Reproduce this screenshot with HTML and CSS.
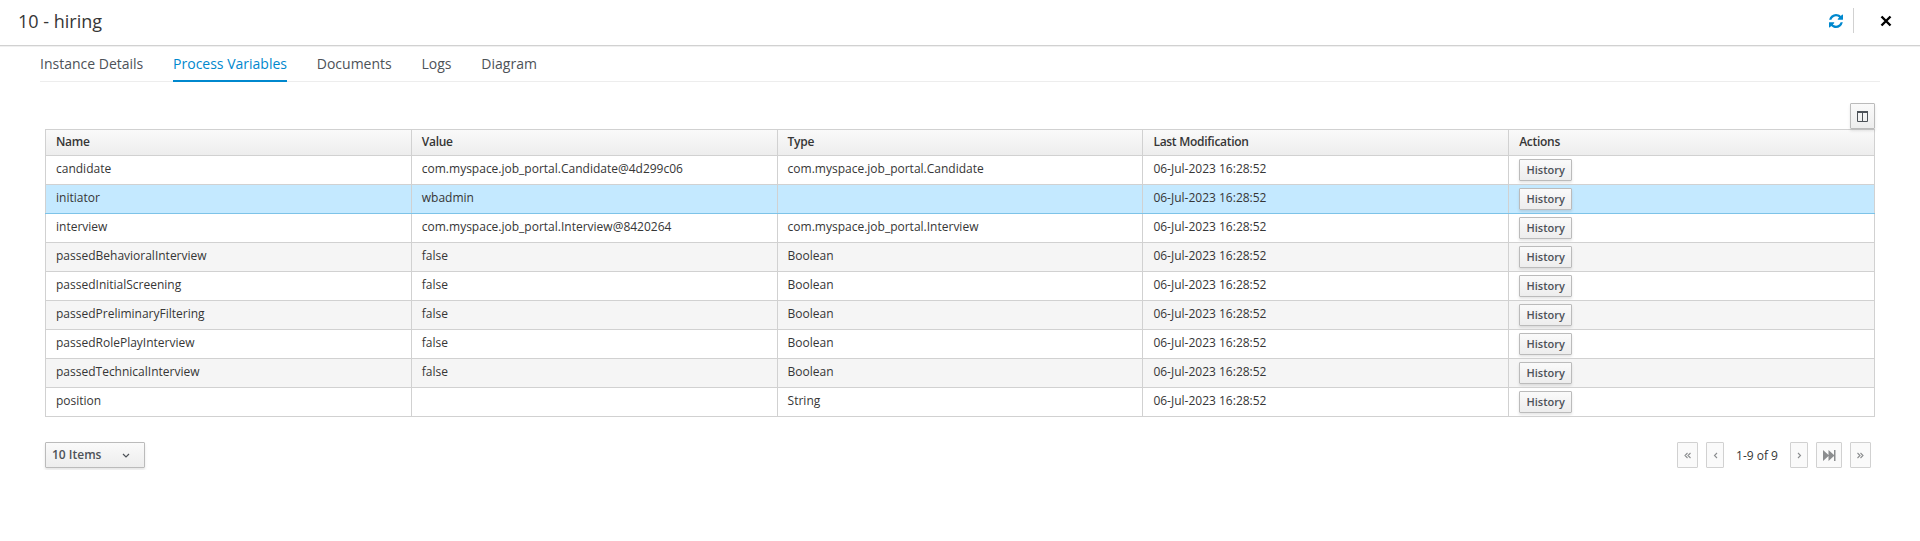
FILE: index.html
```html
<!DOCTYPE html>
<html lang="en">
<head>
<meta charset="utf-8">
<title>10 - hiring</title>
<link rel="stylesheet" href="styles.css">
</head>
<body>
<header class="header">
  <h1 class="title">10 - hiring</h1>
  <div class="tools">
    <svg class="refresh" width="14" height="14" viewBox="0 0 1536 1536" fill="currentColor"><path d="M1511 928q0 5-1 7-64 268-268 434.500T764 1536q-146 0-282.500-55T238 1324l-129 129q-19 19-45 19t-45-19-19-45V960q0-26 19-45t45-19h448q26 0 45 19t19 45-19 45l-137 137q71 66 161 102t187 36q134 0 250-65t186-179q11-17 53-117 8-23 30-23h192q13 0 22.500 9.500t9.500 22.500zm25-800v448q0 26-19 45t-45 19h-448q-26 0-45-19t-19-45 19-45l138-138Q969 256 768 256q-134 0-250 65T332 500q-11 17-53 117-8 23-30 23H50q-13 0-22.500-9.500T18 608v-7q65-268 270-434.500T768 0q146 0 284 55.500T1297 212l130-129q19-19 45-19t45 19 19 45z"/></svg>
    <span class="divider"></span>
    <svg class="close" width="12" height="12" viewBox="0 0 12 12"><path d="M1.500 1.500l9 9M10.500 1.500l-9 9" fill="none" stroke="currentColor" stroke-width="2.400"/></svg>
  </div>
</header>
<nav class="tabs">
  <a class="tab">Instance Details</a>
  <a class="tab active">Process Variables</a>
  <a class="tab">Documents</a>
  <a class="tab">Logs</a>
  <a class="tab">Diagram</a>
</nav>
<main class="content">
  <div class="toolbar">
    <button class="columns"><svg width="11" height="11" viewBox="0 0 11 11" fill="none" stroke="currentColor"><path d="M.5 1v9.500h10V1M5.500 2v8"/><path d="M0 1h11" stroke-width="2"/></svg></button>
  </div>
  <table class="grid">
    <thead><tr><th>Name</th><th>Value</th><th>Type</th><th>Last Modification</th><th>Actions</th></tr></thead>
    <tbody>
      <tr><td>candidate</td><td>com.myspace.job_portal.Candidate@4d299c06</td><td>com.myspace.job_portal.Candidate</td><td>06-Jul-2023 16:28:52</td><td class="actions"><button class="history">History</button></td></tr>
      <tr class="selected"><td>initiator</td><td>wbadmin</td><td></td><td>06-Jul-2023 16:28:52</td><td class="actions"><button class="history">History</button></td></tr>
      <tr><td>interview</td><td>com.myspace.job_portal.Interview@8420264</td><td>com.myspace.job_portal.Interview</td><td>06-Jul-2023 16:28:52</td><td class="actions"><button class="history">History</button></td></tr>
      <tr class="even"><td>passedBehavioralInterview</td><td>false</td><td>Boolean</td><td>06-Jul-2023 16:28:52</td><td class="actions"><button class="history">History</button></td></tr>
      <tr><td>passedInitialScreening</td><td>false</td><td>Boolean</td><td>06-Jul-2023 16:28:52</td><td class="actions"><button class="history">History</button></td></tr>
      <tr class="even"><td>passedPreliminaryFiltering</td><td>false</td><td>Boolean</td><td>06-Jul-2023 16:28:52</td><td class="actions"><button class="history">History</button></td></tr>
      <tr><td>passedRolePlayInterview</td><td>false</td><td>Boolean</td><td>06-Jul-2023 16:28:52</td><td class="actions"><button class="history">History</button></td></tr>
      <tr class="even"><td>passedTechnicalInterview</td><td>false</td><td>Boolean</td><td>06-Jul-2023 16:28:52</td><td class="actions"><button class="history">History</button></td></tr>
      <tr><td>position</td><td></td><td>String</td><td>06-Jul-2023 16:28:52</td><td class="actions"><button class="history">History</button></td></tr>
    </tbody>
  </table>
  <footer class="footer">
    <button class="page-size">10 Items<svg width="8" height="6" viewBox="0 0 8 6"><path d="M1 1l3 3 3-3" fill="none" stroke="currentColor" stroke-width="1.200"/></svg></button>
    <div class="pager">
      <button class="page wide"><svg width="7" height="7" viewBox="0 0 7 7"><path d="M3.500 1L1 3.500 3.500 6M6.500 1L4 3.500 6.500 6"/></svg></button>
      <button class="page"><svg width="5" height="7" viewBox="0 0 5 7"><path d="M4 1L1.500 3.500 4 6"/></svg></button>
      <span class="range">1-9 of 9</span>
      <button class="page"><svg width="5" height="7" viewBox="0 0 5 7"><path d="M1 1l2.500 2.500L1 6"/></svg></button>
      <button class="page forward"><svg class="solid" width="13" height="11" viewBox="0 0 13 11"><path d="M0 0l5.500 5V0l5.500 5V0h1.500v11H11V6l-5.500 5V6L0 11z"/></svg></button>
      <button class="page wide"><svg width="7" height="7" viewBox="0 0 7 7"><path d="M.5 1L3 3.500.5 6M3.500 1L6 3.500 3.500 6"/></svg></button>
    </div>
  </footer>
</main>
</body>
</html>
```
FILE: styles.css
```css
* { box-sizing: border-box; }
body {
  margin: 0;
  background: #fff;
  color: #363636;
  font: 12px/20px "Open Sans", sans-serif;
}
button {
  display: flex;
  align-items: center;
  justify-content: center;
  margin: 0;
  padding: 0;
  border: 1px solid #bbb;
  border-radius: 1px;
  background: linear-gradient(#fafafa, #ededed);
  box-shadow: 0 2px 3px rgba(3, 3, 3, .1);
  color: #4d5258;
  font: 600 12px/20px "Open Sans", sans-serif;
}
.header {
  display: flex;
  justify-content: space-between;
  height: 46px;
  padding: 0 28px 0 18px;
  border-bottom: 1px solid #d1d1d1;
  box-shadow: 0 1px 0 #f0f0f0;
}
.title {
  margin: 0;
  font-size: 18px;
  font-weight: 400;
  line-height: 43px;
}
.tools { display: flex; height: 41px; align-items: center; }
.refresh { color: #0088ce; }
.divider { width: 1px; height: 25px; margin: 0 26px 0 10px; background: #d1d1d1; }
.close { color: #000; }
.tabs {
  display: flex;
  gap: 29.8px;
  height: 36px;
  margin: 0 40px;
  border-bottom: 1px solid #ededed;
}
.tab {
  height: 36px;
  padding-top: 6px;
  color: #4d5258;
  font-size: 14px;
  line-height: 24px;
}
.active { border-bottom: 2px solid #0088ce; color: #0088ce; }
.content { padding: 21px 45px 0; }
.toolbar { display: flex; justify-content: flex-end; }
.columns { width: 25px; height: 26px; }
.grid {
  width: 1830px;
  border-collapse: collapse;
  table-layout: fixed;
}
.grid th {
  height: 26px;
  padding: 0 10px 2px;
  border: 1px solid #d1d1d1;
  text-align: left;
  font-weight: 600;
  letter-spacing: -.28px;
  line-height: 20px;
}
.grid thead { background: linear-gradient(#fafafa, #ededed); }
.grid td {
  height: 29px;
  padding: 3px 10px 5px;
  border: 1px solid #d1d1d1;
  line-height: 20px;
}
.grid .actions { padding: 3px 10px; }
.grid .even { background: #f5f5f5; }
.grid .selected { background: #c4e9ff; }
.grid .selected td { border-bottom-color: #7dc3e8; }
.history {
  width: 53px;
  height: 22px;
  font-size: 11px;
}
.footer {
  display: flex;
  justify-content: space-between;
  padding: 25px 4px 0 0;
}
.page-size { width: 100px; height: 26px; padding: 0 14px 0 6px; justify-content: space-between; }
.page-size svg { margin-top: 2px; }
.pager { display: flex; gap: 8px; }
.page {
  width: 18px;
  height: 26px;
  border-color: #d1d1d1;
  background: #fafafa;
  box-shadow: none;
  color: #8b8d8f;
}
.wide { width: 21px; }
.forward { width: 26px; }
.page svg { fill: none; stroke: currentColor; stroke-width: 1.1; }
.page .solid { fill: currentColor; stroke: none; }
.range { width: 50px; text-align: center; line-height: 28px; }
```
